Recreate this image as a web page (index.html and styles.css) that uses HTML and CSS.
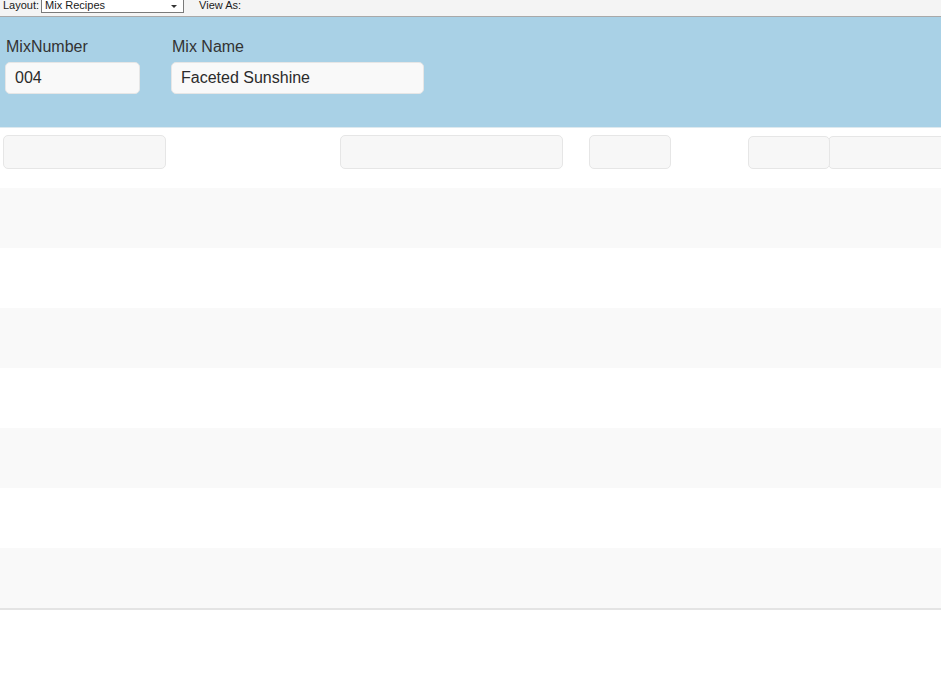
FILE: index.html
```html
<!DOCTYPE html>
<html lang="en">
<head>
    <meta charset="UTF-8">
    <title>Mix Recipes</title>
    <link rel="stylesheet" href="styles.css">
</head>
<body>
    <div class="toolbar">
        <span class="tb-label">Layout:</span>
        <div class="tb-select">
            <span>Mix Recipes</span>
            <span class="arrow"></span>
        </div>
        <span class="tb-label view">View As:</span>
    </div>

    <div class="header">
        <div class="field-group num">
            <label>MixNumber</label>
            <div class="input">004</div>
        </div>
        <div class="field-group name">
            <label>Mix Name</label>
            <div class="input">Faceted Sunshine</div>
        </div>
    </div>

    <div class="blank-row">
        <div class="input blank b1"></div>
        <div class="input blank b2"></div>
        <div class="input blank b3"></div>
        <div class="input blank b4"></div>
        <div class="input blank b5"></div>
    </div>

    <div class="portal">
        <div class="portal-row"></div>
        <div class="portal-row"></div>
        <div class="portal-row"></div>
        <div class="portal-row"></div>
        <div class="portal-row"></div>
        <div class="portal-row"></div>
        <div class="portal-row"></div>
    </div>
</body>
</html>
```

FILE: styles.css
```css
body {
    margin: 0;
    background: #fff;
    font-family: "Liberation Sans", Arial, sans-serif;
    color: #333;
    overflow: hidden;
}
.toolbar {
    height: 16px;
    background: #f4f4f4;
    border-bottom: 1px solid #a9a9a9;
    display: flex;
    align-items: flex-start;
    font-size: 11px;
    color: #1a1a1a;
}
.tb-label {
    margin-left: 3px;
    line-height: 12px;
    margin-top: -1px;
}
.tb-label.view {
    margin-left: 15px;
}
.tb-select {
    margin-left: 2px;
    margin-top: -2px;
    width: 138px;
    height: 13px;
    border: 1px solid #7a7a7a;
    background: #fff;
    display: flex;
    justify-content: space-between;
    align-items: center;
    padding-left: 3px;
    line-height: 13px;
}
.tb-select .arrow {
    width: 0;
    height: 0;
    border-left: 3px solid transparent;
    border-right: 3px solid transparent;
    border-top: 3px solid #333;
    margin-right: 6px;
    margin-top: 2px;
}
.header {
    background: #a9d1e6;
    height: 111px;
    border-bottom: 1px solid #dde9ef;
    display: flex;
    padding: 0 0 0 5px;
    box-sizing: border-box;
}
.field-group {
    display: flex;
    flex-direction: column;
}
.field-group label {
    font-size: 16px;
    margin: 20px 0 0 1px;
    height: 25px;
    line-height: 19px;
}
.field-group.num .input {
    width: 135px;
}
.field-group.name {
    margin-left: 31px;
}
.field-group.name .input {
    width: 253px;
}
.input {
    height: 32px;
    box-sizing: border-box;
    background: #f9f9f9;
    border: 1px solid #e6e6e6;
    border-radius: 5px;
    font-size: 16px;
    line-height: 30px;
    padding-left: 9px;
    color: #2b2b2b;
}
.blank-row {
    display: flex;
    padding: 7px 0 0 3px;
    height: 60px;
    box-sizing: border-box;
    align-items: flex-start;
}
.blank {
    flex-shrink: 0;
    height: 34px;
    padding: 0;
    background: #f7f7f7;
}
.b1 { width: 163px; }
.b2 { width: 223px; margin-left: 174px; }
.b3 { width: 82px; margin-left: 26px; }
.b4 {
    width: 82px;
    margin-left: 77px;
    margin-top: 1px;
    height: 33px;
    position: relative;
    z-index: 1;
}
.b5 {
    width: 130px;
    margin-left: -2px;
    margin-top: 1px;
    height: 33px;
    border-radius: 5px 0 0 5px;
}
.portal {
    border-bottom: 2px solid #e4e4e4;
}
.portal-row {
    height: 60px;
}
.portal-row:nth-child(odd) {
    background: #f9f9f9;
}
```
